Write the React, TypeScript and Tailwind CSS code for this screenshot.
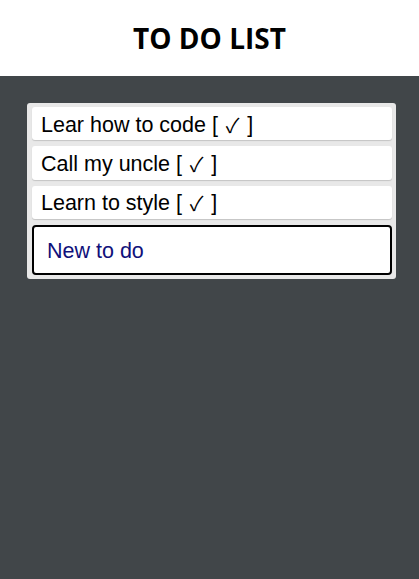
import { useState } from 'react'

const todos = ['Lear how to code', 'Call my uncle', 'Learn to style']

export default function App() {
  const [value, setValue] = useState('New to do')

  return (
    <div className="min-h-[579px] bg-[#414649] font-['Liberation_Sans',Arial,sans-serif]">
      <header className="h-[76px] bg-white flex items-center justify-center">
        <h1 className="font-['Open_Sans',sans-serif] font-bold text-[28px] leading-none text-black">TO DO LIST</h1>
      </header>
      <div className="pt-[27px] pl-[27px] pr-[23px]">
        <div className="bg-[#e8e8e8] rounded-[3px] pt-[4px] pb-[4px] pl-[5px] pr-[4px] flex flex-col gap-[6px]">
          {todos.map((t) => (
            <div
              key={t}
              className="bg-white rounded-[3px] h-[33.3px] shadow-[0_1px_1px_#c4c4c4] flex items-center pl-[9px] pt-[2px] text-[21.5px] text-black whitespace-pre"
            >
              {t} [ <span className="inline-block w-[17.3px] text-center font-['Noto_Sans_CJK_JP',sans-serif] font-normal text-[20px]">✓</span> ]
            </div>
          ))}
          <input
            value={value}
            onChange={(e) => setValue(e.target.value)}
            className="h-[50px] border-2 border-black rounded-[4px] bg-white px-[13px] pt-[3px] text-[21.5px] text-[#10107a] caret-black outline-none font-['Liberation_Sans',Arial,sans-serif]"
            autoFocus
          />
        </div>
      </div>
    </div>
  )
}
